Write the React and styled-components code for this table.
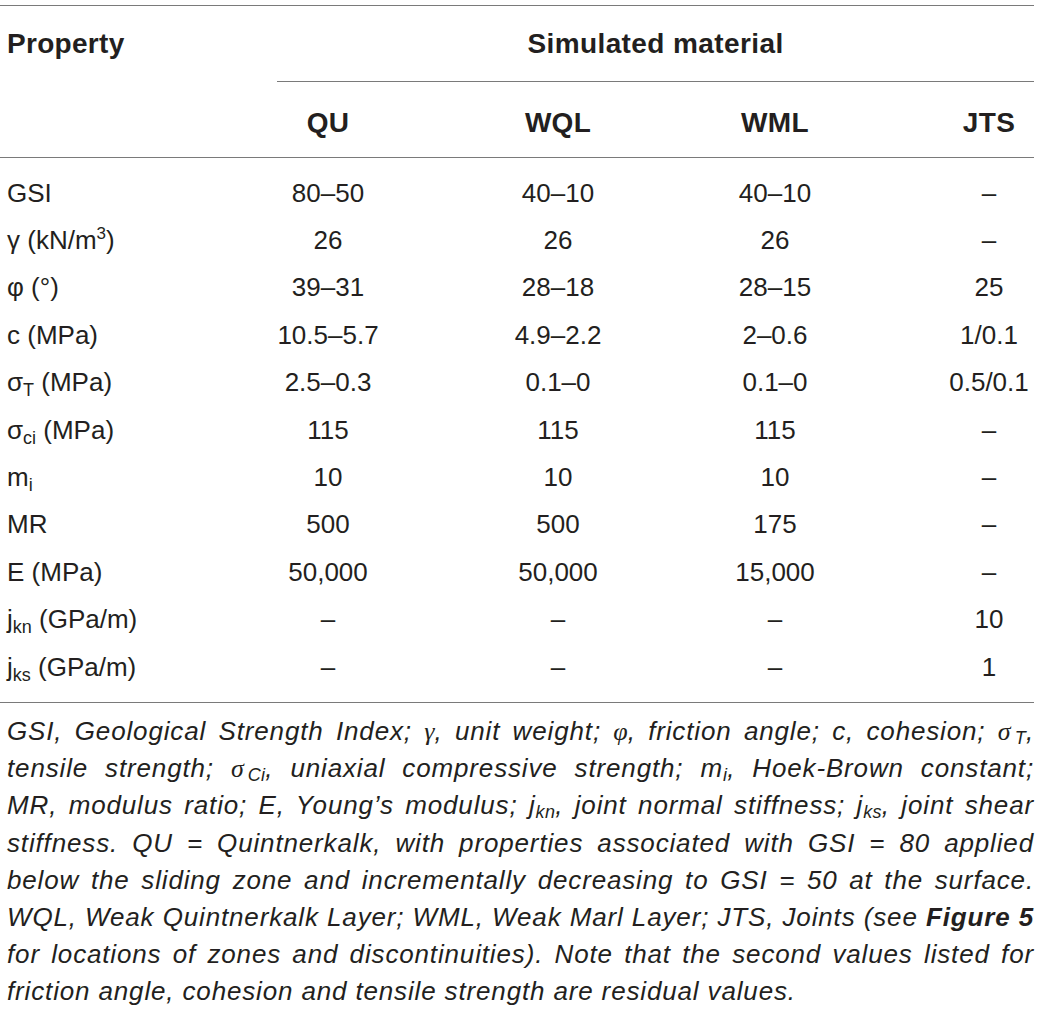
import React from "react";
import styled, { createGlobalStyle } from "styled-components";

const GlobalStyle = createGlobalStyle`
  html, body {
    margin: 0;
    padding: 0;
    background: #ffffff;
  }
  body {
    font-family: "Liberation Sans", Arial, sans-serif;
    color: #231f20;
  }
`;

const Page = styled.div`
  width: 1041px;
  padding-top: 5px;
  box-sizing: border-box;
`;

const Table = styled.div`
  width: 1034px;
  border-top: 1px solid #7a7a7a;
  border-bottom: 1px solid #7a7a7a;
`;

const columns = `213px 230px 230px 204px 67px 90px`;

const HeadRow = styled.div`
  display: grid;
  grid-template-columns: ${columns};
  height: ${(p) => (p.$ruled ? "75px" : "76px")};
  align-items: center;
  border-bottom: ${(p) => (p.$ruled ? "1px solid #7a7a7a" : "none")};

  & > :last-child {
    grid-column: 6;
  }
`;

const HeadCell = styled.div`
  font-weight: bold;
  font-size: 28px;
  letter-spacing: 0.3px;
  text-align: ${(p) => (p.$left ? "left" : "center")};
  padding-left: ${(p) => (p.$left ? "7px" : "0")};
  padding-top: ${(p) => (p.$left ? "0" : "6px")};
  white-space: nowrap;
`;

const GroupHead = styled.div`
  grid-column: 2 / -1 !important;
  margin-left: 64px;
  align-self: stretch;
  display: flex;
  align-items: center;
  justify-content: center;
  border-bottom: 1px solid #7a7a7a;
  font-weight: bold;
  font-size: 28px;
  letter-spacing: 0.4px;
`;

const Body = styled.div`
  padding: 11px 0 12px;
`;

const Row = styled.div`
  display: grid;
  grid-template-columns: ${columns};
  height: 47.4px;
  align-items: center;

  & > :last-child {
    grid-column: 6;
  }
`;

const Cell = styled.div`
  font-size: 26px;
  line-height: 30px;
  text-align: ${(p) => (p.$left ? "left" : "center")};
  padding-left: ${(p) => (p.$left ? "7px" : "0")};
  white-space: nowrap;
`;

const Sup = styled.sup`
  font-size: 17px;
  vertical-align: 10px;
  line-height: 0;
`;

const Sub = styled.sub`
  font-size: 18px;
  vertical-align: -5px;
  line-height: 0;
`;

const Caption = styled.div`
  padding: 10px 7px 0 7px;
  font-size: 26px;
  letter-spacing: 0.85px;
  line-height: 37.1px;
  font-style: italic;
  color: #231f20;
`;

const Line = styled.span`
  display: block;
  text-align: justify;
  text-align-last: ${(p) => (p.$last ? "left" : "justify")};
`;

const Greek = styled.span`
  font-family: "Liberation Serif", "Times New Roman", serif;
  font-style: italic;
  letter-spacing: 0;
`;

const CapSub = styled.sub`
  font-size: 18px;
  letter-spacing: 0.3px;
  vertical-align: -4px;
  line-height: 0;
  margin-left: ${(p) => (p.$gap ? "4px" : "0")};
`;

const rows = [
  { label: "GSI", values: ["80–50", "40–10", "40–10", "–"] },
  { label: <>γ (kN/m<Sup>3</Sup>)</>, values: ["26", "26", "26", "–"] },
  { label: "φ (°)", values: ["39–31", "28–18", "28–15", "25"] },
  { label: "c (MPa)", values: ["10.5–5.7", "4.9–2.2", "2–0.6", "1/0.1"] },
  { label: <>σ<Sub>T</Sub> (MPa)</>, values: ["2.5–0.3", "0.1–0", "0.1–0", "0.5/0.1"] },
  { label: <>σ<Sub>ci</Sub> (MPa)</>, values: ["115", "115", "115", "–"] },
  { label: <>m<Sub>i</Sub></>, values: ["10", "10", "10", "–"] },
  { label: "MR", values: ["500", "500", "175", "–"] },
  { label: "E (MPa)", values: ["50,000", "50,000", "15,000", "–"] },
  { label: <>j<Sub>kn</Sub> (GPa/m)</>, values: ["–", "–", "–", "10"] },
  { label: <>j<Sub>ks</Sub> (GPa/m)</>, values: ["–", "–", "–", "1"] },
];

export default function App() {
  return (
    <Page>
      <GlobalStyle />
      <Table>
        <HeadRow>
          <HeadCell $left>Property</HeadCell>
          <GroupHead>Simulated material</GroupHead>
        </HeadRow>
        <HeadRow $ruled>
          <HeadCell />
          <HeadCell>QU</HeadCell>
          <HeadCell>WQL</HeadCell>
          <HeadCell>WML</HeadCell>
          <HeadCell>JTS</HeadCell>
        </HeadRow>
        <Body>
          {rows.map((r, i) => (
            <Row key={i}>
              <Cell $left>{r.label}</Cell>
              {r.values.map((v, j) => (
                <Cell key={j}>{v}</Cell>
              ))}
            </Row>
          ))}
        </Body>
      </Table>

      <Caption>
        <Line>
          GSI, Geological Strength Index; <Greek>γ</Greek>, unit weight;{" "}
          <Greek>φ</Greek>, friction angle; c, cohesion; <Greek>σ</Greek>
          <CapSub $gap>T</CapSub>,
        </Line>
        <Line>
          tensile strength; <Greek>σ</Greek>
          <CapSub $gap>Ci</CapSub>, uniaxial compressive strength; m<CapSub>i</CapSub>,
          Hoek-Brown constant;
        </Line>
        <Line>
          MR, modulus ratio; E, Young’s modulus; j<CapSub>kn</CapSub>, joint
          normal stiffness; j<CapSub>ks</CapSub>, joint shear
        </Line>
        <Line>
          stiffness. QU = Quintnerkalk, with properties associated with GSI = 80
          applied
        </Line>
        <Line>
          below the sliding zone and incrementally decreasing to GSI = 50 at the
          surface.
        </Line>
        <Line>
          WQL, Weak Quintnerkalk Layer; WML, Weak Marl Layer; JTS, Joints (see{" "}
          <b>Figure 5</b>
        </Line>
        <Line>
          for locations of zones and discontinuities). Note that the second
          values listed for
        </Line>
        <Line $last>
          friction angle, cohesion and tensile strength are residual values.
        </Line>
      </Caption>
    </Page>
  );
}
